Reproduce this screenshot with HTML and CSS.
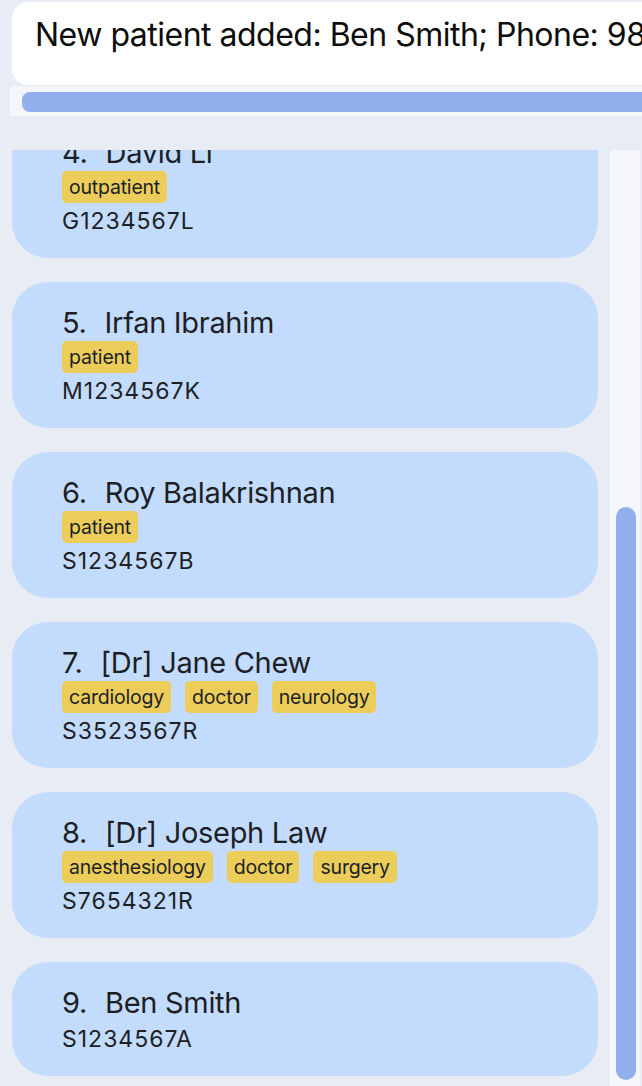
FILE: index.html
```html
<!DOCTYPE html>
<html>
<head>
<meta charset="utf-8">
<link rel="stylesheet" href="styles.css">
</head>
<body>
<div class="app">
  <div class="result">
    <div class="result-box">New patient added: Ben Smith; Phone: 98347612; Email: ben@example.com</div>
    <div class="hscroll"><div class="hthumb"></div></div>
  </div>
  <div class="main">
    <div class="list-viewport">
      <div class="list">
        <div class="card">
          <div class="name-row"><span class="idx">4.</span><span class="name">David Li</span></div>
          <div class="tags"><span class="tag">outpatient</span></div>
          <div class="nric">G1234567L</div>
        </div>
        <div class="card">
          <div class="name-row"><span class="idx">5.</span><span class="name">Irfan Ibrahim</span></div>
          <div class="tags"><span class="tag">patient</span></div>
          <div class="nric">M1234567K</div>
        </div>
        <div class="card">
          <div class="name-row"><span class="idx">6.</span><span class="name">Roy Balakrishnan</span></div>
          <div class="tags"><span class="tag">patient</span></div>
          <div class="nric">S1234567B</div>
        </div>
        <div class="card">
          <div class="name-row"><span class="idx">7.</span><span class="name">[Dr] Jane Chew</span></div>
          <div class="tags"><span class="tag">cardiology</span><span class="tag">doctor</span><span class="tag">neurology</span></div>
          <div class="nric">S3523567R</div>
        </div>
        <div class="card">
          <div class="name-row"><span class="idx">8.</span><span class="name">[Dr] Joseph Law</span></div>
          <div class="tags"><span class="tag">anesthesiology</span><span class="tag">doctor</span><span class="tag">surgery</span></div>
          <div class="nric">S7654321R</div>
        </div>
        <div class="card">
          <div class="name-row"><span class="idx">9.</span><span class="name">Ben Smith</span></div>
          <div class="nric">S1234567A</div>
        </div>
      </div>
    </div>
    <div class="vscroll"><div class="vthumb"></div></div>
  </div>
</div>
</body>
</html>
```
FILE: styles.css
```css
html, body {
  margin: 0;
  padding: 0;
  width: 642px;
  height: 1086px;
  overflow: hidden;
  background: #e8edf5;
  font-family: Inter, "Noto Sans", sans-serif;
  color: #1c1f26;
}

.app {
  display: flex;
  flex-direction: column;
  height: 1086px;
}

.result {
  padding-top: 2px;
  padding-left: 10px;
}

.result-box {
  margin-left: 2px;
  height: 83px;
  background: #ffffff;
  border-radius: 16px 0 0 16px;
  padding: 0 0 0 23px;
  box-sizing: border-box;
  font-size: 32px;
  line-height: 66px;
  white-space: nowrap;
  overflow: hidden;
  color: #0d0d0d;
  letter-spacing: -0.5px;
}

.hscroll {
  margin-top: 1px;
  height: 30px;
  background: #f4f6fa;
  padding: 6px 0 6px 12px;
  box-sizing: border-box;
}

.hthumb {
  height: 20px;
  background: #91aeed;
  border-radius: 8px 0 0 8px;
}

.main {
  margin-top: 34px;
  flex: 1;
  display: flex;
  min-height: 0;
  padding-right: 2px;
}

.list-viewport {
  margin-left: 12px;
  width: 586px;
  overflow: hidden;
}

.list {
  margin-top: -38px;
  display: flex;
  flex-direction: column;
  gap: 24px;
}

.card {
  background: #c3dbfc;
  border-radius: 36px;
  padding: 22px 20px 19px 50px;
}

.name-row {
  display: flex;
  gap: 18px;
  font-size: 29px;
  line-height: 37px;
  letter-spacing: -0.3px;
}

.tags {
  display: flex;
  gap: 14px;
  height: 32px;
}

.tag {
  background: #eccd59;
  border-radius: 5px;
  padding: 0 7px;
  font-size: 19.5px;
  line-height: 32px;
  letter-spacing: -0.2px;
}

.nric {
  font-size: 23px;
  line-height: 36px;
  letter-spacing: 1px;
}

.vscroll {
  margin-left: 12px;
  width: 30px;
  background: #f4f6fa;
  padding: 357px 4px 6px 6px;
  box-sizing: border-box;
}

.vthumb {
  width: 20px;
  height: 100%;
  background: #91aeed;
  border-radius: 10px;
}
```
